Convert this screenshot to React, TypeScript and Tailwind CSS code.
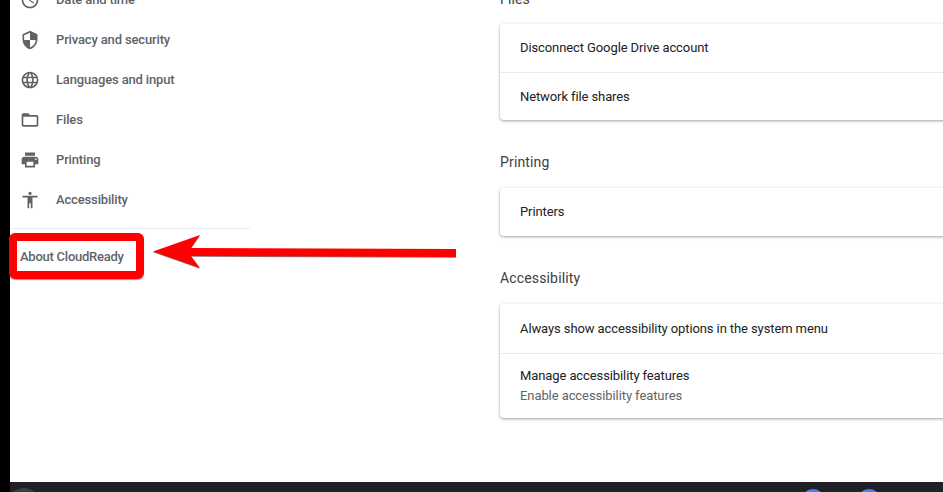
const menu = [
  {
    label: 'Date and time',
    icon: 'M11.99 2C6.47 2 2 6.48 2 12s4.47 10 9.99 10C17.52 22 22 17.52 22 12S17.52 2 11.99 2zM12 20c-4.42 0-8-3.58-8-8s3.58-8 8-8 8 3.58 8 8-3.58 8-8 8zm.5-13H11v6l5.25 3.15.75-1.23-4.5-2.67z',
  },
  {
    label: 'Privacy and security',
    icon: 'M12 1L3 5v6c0 5.55 3.84 10.74 9 12 5.16-1.26 9-6.45 9-12V5l-9-4zm0 10.99h7c-.53 4.12-3.28 7.79-7 8.94V12H5V6.3l7-3.11v8.8z',
  },
  {
    label: 'Languages and input',
    icon: 'M11.99 2C6.47 2 2 6.48 2 12s4.47 10 9.99 10C17.52 22 22 17.52 22 12S17.52 2 11.99 2zm6.93 6h-2.95c-.32-1.25-.78-2.45-1.38-3.56 1.84.63 3.37 1.91 4.33 3.56zM12 4.04c.83 1.2 1.48 2.53 1.91 3.96h-3.82c.43-1.43 1.08-2.76 1.91-3.96zM4.26 14C4.1 13.36 4 12.69 4 12s.1-1.36.26-2h3.38c-.08.66-.14 1.32-.14 2 0 .68.06 1.34.14 2H4.26zm.82 2h2.95c.32 1.25.78 2.45 1.38 3.56-1.84-.63-3.37-1.9-4.33-3.56zm2.95-8H5.08c.96-1.66 2.49-2.93 4.33-3.56C8.81 5.55 8.35 6.75 8.03 8zM12 19.96c-.83-1.2-1.48-2.53-1.91-3.96h3.82c-.43 1.43-1.08 2.76-1.91 3.96zM14.34 14H9.66c-.09-.66-.16-1.32-.16-2 0-.68.07-1.35.16-2h4.68c.09.65.16 1.32.16 2 0 .68-.07 1.34-.16 2zm.25 5.56c.6-1.11 1.06-2.31 1.38-3.56h2.95c-.96 1.65-2.49 2.93-4.33 3.56zM16.36 14c.08-.66.14-1.32.14-2 0-.68-.06-1.34-.14-2h3.38c.16.64.26 1.31.26 2s-.1 1.36-.26 2h-3.38z',
  },
  {
    label: 'Files',
    icon: 'M20 6h-8l-2-2H4c-1.1 0-1.99.9-1.99 2L2 18c0 1.1.9 2 2 2h16c1.1 0 2-.9 2-2V8c0-1.1-.9-2-2-2zm0 12H4V8h16v10z',
  },
  {
    label: 'Printing',
    icon: 'M19 8H5c-1.66 0-3 1.34-3 3v6h4v4h12v-4h4v-6c0-1.66-1.34-3-3-3zm-3 11H8v-5h8v5zm3-7c-.55 0-1-.45-1-1s.45-1 1-1 1 .45 1 1-.45 1-1 1zm-1-9H6v4h12V3z',
  },
  {
    label: 'Accessibility',
    icon: 'M12 2c1.1 0 2 .9 2 2s-.9 2-2 2-2-.9-2-2 .9-2 2-2zm9 7h-6v13h-2v-6h-2v6H9V9H3V7h18v2z',
  },
];

function Row({ title, sub, className }: { title: string; sub?: string; className: string }) {
  return (
    <div className={`flex flex-col justify-center pl-5 ${className}`}>
      <div className="text-[13px] leading-5 tracking-[-0.1px] text-[#202124]">{title}</div>
      {sub && <div className="text-[13px] leading-5 tracking-[-0.08px] text-[#5f6368]">{sub}</div>}
    </div>
  );
}

function Card({ children, className = '' }: { children: React.ReactNode; className?: string }) {
  return (
    <div className={`bg-white rounded-[4px] shadow-[0_1px_2px_rgba(60,64,67,0.3),0_1px_3px_1px_rgba(60,64,67,0.15)] ${className}`}>
      {children}
    </div>
  );
}

function Heading({ children, className = '' }: { children: React.ReactNode; className?: string }) {
  return <h2 className={`h-6 text-[14px] leading-6 tracking-[0.15px] text-[#3c4043] ${className}`}>{children}</h2>;
}

export default function App() {
  return (
    <div className="relative flex h-[492px] w-[943px] overflow-hidden bg-black font-['Roboto',sans-serif]">
      <div className="w-[10px] shrink-0 bg-black" />
      <div className="flex min-w-0 flex-1 flex-col">
        <div className="flex h-[482px] overflow-hidden bg-white">
          <nav className="mt-[-20px] w-[240px] shrink-0">
            {menu.map(item => (
              <div key={item.label} className="flex h-10 items-center pl-[10px]">
                <svg viewBox="0 0 24 24" className="h-5 w-5 fill-[#5f6368]">
                  <path d={item.icon} />
                </svg>
                <span className="ml-4 text-[13px] font-medium tracking-[-0.15px] text-[#5f6368]">{item.label}</span>
              </div>
            ))}
            <div className="mt-[8px] h-px bg-[#e8eaed]" />
            <div className="flex h-[56px] items-center pl-[10px] text-[13px] font-medium tracking-[-0.25px] text-[#5f6368]">
              About CloudReady
            </div>
          </nav>
          <main className="ml-[250px] mt-[-13px] w-[480px] shrink-0">
            <Heading>Files</Heading>
            <Card className="mt-[13px]">
              <Row title="Disconnect Google Drive account" className="h-[48px] border-b border-[#e8eaed] box-content" />
              <Row title="Network file shares" className="h-[47px]" />
            </Card>
            <Heading className="mt-[30px]">Printing</Heading>
            <Card className="mt-[14px]">
              <Row title="Printers" className="h-[48px]" />
            </Card>
            <Heading className="mt-[30px]">Accessibility</Heading>
            <Card className="mt-[14px]">
              <Row title="Always show accessibility options in the system menu" className="h-[49px] border-b border-[#e8eaed] box-content" />
              <Row title="Manage accessibility features" sub="Enable accessibility features" className="h-[64px]" />
            </Card>
          </main>
        </div>
        <div className="relative h-[10px] overflow-hidden bg-[#202124]">
          <div className="absolute left-[-2px] top-[6px] h-8 w-8 rounded-full bg-[#3c3d40]" />
          <div className="absolute left-[791px] top-[7px] h-6 w-6 rounded-full bg-[#4285f4]" />
          <div className="absolute left-[847px] top-[7px] h-6 w-6 rounded-full bg-[#4285f4]" />
        </div>
      </div>

      {/* red annotation pasted on top of the screenshot */}
      <div className="absolute left-[9px] top-[233px] h-[46px] w-[135px] rounded-[6px] border-[8px] border-[#ff0000] shadow-[0_1px_1px_rgba(0,0,0,0.4)]" />
      <svg className="absolute left-[150px] top-[232px] h-[40px] w-[310px]" viewBox="0 0 310 40">
        <path d="M3 19.5 L50 3 L41 16 L306 17 L306 25 L41 24 L50 36 Z" fill="#808080" transform="translate(0 0.8)" />
        <path d="M3 19.5 L50 3 L41 16 L306 17 L306 25 L41 24 L50 36 Z" fill="#ff0000" />
      </svg>
    </div>
  );
}
